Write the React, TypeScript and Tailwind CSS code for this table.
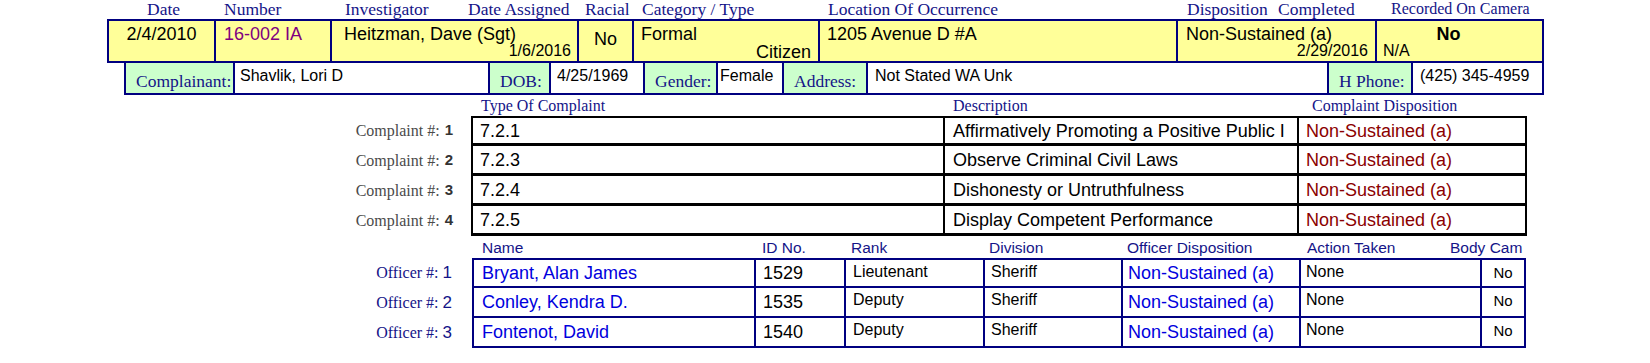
import React from 'react';

const complaints = [
  { n: 1, code: '7.2.1', desc: 'Affirmatively Promoting a Positive Public I', disp: 'Non-Sustained (a)' },
  { n: 2, code: '7.2.3', desc: 'Observe Criminal Civil Laws', disp: 'Non-Sustained (a)' },
  { n: 3, code: '7.2.4', desc: 'Dishonesty or Untruthfulness', disp: 'Non-Sustained (a)' },
  { n: 4, code: '7.2.5', desc: 'Display Competent Performance', disp: 'Non-Sustained (a)' },
];

const officers = [
  { n: 1, name: 'Bryant, Alan James', id: '1529', rank: 'Lieutenant', div: 'Sheriff', disp: 'Non-Sustained (a)', action: 'None', cam: 'No' },
  { n: 2, name: 'Conley, Kendra D.', id: '1535', rank: 'Deputy', div: 'Sheriff', disp: 'Non-Sustained (a)', action: 'None', cam: 'No' },
  { n: 3, name: 'Fontenot, David', id: '1540', rank: 'Deputy', div: 'Sheriff', disp: 'Non-Sustained (a)', action: 'None', cam: 'No' },
];

const Label = ({ w, children }: { w: string; children: React.ReactNode }) => (
  <div className={`${w} h-full shrink-0 border-r-2 border-[#000080] bg-[#ccffcc] flex items-end pl-[10px] pb-[3px] font-['Liberation_Serif',serif] text-[17.5px] leading-none text-[#141488]`}>
    {children}
  </div>
);

const Value = ({ w, pl, children }: { w: string; pl: string; children: React.ReactNode }) => (
  <div className={`${w} h-full shrink-0 border-r-2 border-[#000080] bg-white ${pl} pt-[5px] text-[16px] leading-none`}>
    {children}
  </div>
);

export default function App() {
  return (
    <div className="w-[1650px] h-[363px] bg-white overflow-hidden font-['Liberation_Sans',Arial,sans-serif] text-black">
      {/* case header labels */}
      <div className="flex h-[19px] pt-[1px] pl-[147px] font-['Liberation_Serif',serif] text-[17.5px] leading-none text-[#141488] whitespace-nowrap">
        <span className="w-[77px]">Date</span>
        <span className="w-[121px]">Number</span>
        <span className="w-[123px]">Investigator</span>
        <span className="w-[117px]">Date Assigned</span>
        <span className="w-[57px]">Racial</span>
        <span className="w-[186px]">Category / Type</span>
        <span className="w-[359px]">Location Of Occurrence</span>
        <span className="w-[91px]">Disposition</span>
        <span className="w-[113px]">Completed</span>
        <span className="text-[16px]">Recorded On Camera</span>
      </div>

      {/* case row */}
      <div className="ml-[107px] w-[1437px] h-[44px] border-2 border-[#000080] bg-[#ffff99] flex text-[18px] leading-none whitespace-nowrap">
        <div className="w-[107px] shrink-0 border-r-2 border-[#000080] text-center pt-[4px]">2/4/2010</div>
        <div className="w-[116px] shrink-0 border-r-2 border-[#000080] pl-[8px] pt-[4px] text-[#800080]">16-002 IA</div>
        <div className="w-[247px] shrink-0 border-r-2 border-[#000080] flex flex-col justify-between pt-[4px] pb-[4px]">
          <span className="pl-[12px]">Heitzman, Dave (Sgt)</span>
          <span className="text-right pr-[6px] text-[16px]">1/6/2016</span>
        </div>
        <div className="w-[55px] shrink-0 border-r-2 border-[#000080] flex items-center justify-center pb-[4px]">No</div>
        <div className="w-[186px] shrink-0 border-r-2 border-[#000080] flex flex-col justify-between pt-[4px] pb-[2px]">
          <span className="pl-[7px]">Formal</span>
          <span className="text-right pr-[7px]">Citizen</span>
        </div>
        <div className="w-[358px] shrink-0 border-r-2 border-[#000080] pl-[7px] pt-[4px]">1205 Avenue D #A</div>
        <div className="w-[199px] shrink-0 border-r-2 border-[#000080] flex flex-col justify-between pt-[4px] pb-[4px]">
          <span className="pl-[8px]">Non-Sustained (a)</span>
          <span className="text-right pr-[7px] text-[16px]">2/29/2016</span>
        </div>
        <div className="flex-1 flex flex-col justify-between pt-[4px] pb-[3px]">
          <span className="text-center pr-[22px] font-bold">No</span>
          <span className="pl-[6px] text-[16px]">N/A</span>
        </div>
      </div>

      {/* complainant row */}
      <div className="ml-[124px] w-[1420px] h-[32px] border-x-2 border-b-2 border-[#000080] flex whitespace-nowrap">
        <Label w="w-[109px]">Complainant:</Label>
        <Value w="w-[255px]" pl="pl-[5px]">Shavlik, Lori D</Value>
        <Label w="w-[61px]">DOB:</Label>
        <Value w="w-[94px]" pl="pl-[6px]">4/25/1969</Value>
        <Label w="w-[73px]">Gender:</Label>
        <Value w="w-[66px]" pl="pl-[2px]">Female</Value>
        <Label w="w-[84px]">Address:</Label>
        <Value w="w-[461px]" pl="pl-[7px]">Not Stated WA Unk</Value>
        <Label w="w-[84px]">H Phone:</Label>
        <div className="flex-1 h-full bg-white pl-[7px] pt-[5px] text-[16px] leading-none">(425) 345-4959</div>
      </div>

      {/* complaints */}
      <div className="flex h-[21px] pt-[3px] font-['Liberation_Serif',serif] text-[16px] leading-none text-[#141488] whitespace-nowrap">
        <span className="ml-[481px] w-[472px]">Type Of Complaint</span>
        <span className="w-[359px]">Description</span>
        <span>Complaint Disposition</span>
      </div>
      <div className="flex flex-col">
        {complaints.map((c, i) => (
          <div key={c.n} className="flex h-[30px]">
            <div className="w-[471px] shrink-0 flex items-center justify-end pr-[18px] pb-[1px] whitespace-nowrap">
              <span className="font-['Liberation_Serif',serif] text-[16px] text-[#4a4a4a]">Complaint #:</span>
              <span className="ml-[5px] text-[15px] font-bold text-[#333333]">{c.n}</span>
            </div>
            <div className={`w-[1056px] shrink-0 flex border-x-2 border-b-[3px] border-black text-[18px] leading-none whitespace-nowrap ${i === 0 ? 'border-t-2' : ''}`}>
              <div className="w-[472px] shrink-0 border-r-2 border-black flex items-center pl-[7px]">{c.code}</div>
              <div className="w-[354px] shrink-0 border-r-2 border-black flex items-center pl-[8px] overflow-hidden">{c.desc}</div>
              <div className="flex-1 flex items-center pl-[7px] text-[#8b0000]">{c.disp}</div>
            </div>
          </div>
        ))}
      </div>

      {/* officers */}
      <div className="flex h-[22px] pt-[4px] text-[15.5px] leading-none text-[#141488] whitespace-nowrap">
        <span className="ml-[482px] w-[280px]">Name</span>
        <span className="w-[89px]">ID No.</span>
        <span className="w-[138px]">Rank</span>
        <span className="w-[138px]">Division</span>
        <span className="w-[180px]">Officer Disposition</span>
        <span className="w-[143px]">Action Taken</span>
        <span>Body Cam</span>
      </div>
      <div className="flex flex-col">
        {officers.map((o, i) => (
          <div key={o.n} className="flex h-[30px]">
            <div className="w-[472px] shrink-0 flex items-center justify-end pr-[20px] whitespace-nowrap text-[#141488]">
              <span className="font-['Liberation_Serif',serif] text-[16px]">Officer #:</span>
              <span className="ml-[4px] text-[17px]">{o.n}</span>
            </div>
            <div className={`w-[1054px] shrink-0 flex border-x-2 border-b-2 border-[#000080] leading-none whitespace-nowrap ${i === 0 ? 'border-t-2' : ''}`}>
              <div className="w-[282px] shrink-0 border-r-2 border-[#000080] flex items-center pl-[8px] text-[18px] text-[#0000dd]">{o.name}</div>
              <div className="w-[90px] shrink-0 border-r-2 border-[#000080] flex items-center pl-[7px] text-[18px]">{o.id}</div>
              <div className="w-[139px] shrink-0 border-r-2 border-[#000080] pl-[7px] pt-[4px] text-[16px]">{o.rank}</div>
              <div className="w-[138px] shrink-0 border-r-2 border-[#000080] pl-[6px] pt-[4px] text-[16px]">{o.div}</div>
              <div className="w-[178px] shrink-0 border-r-2 border-[#000080] flex items-center pl-[5px] text-[18px] text-[#0000dd]">{o.disp}</div>
              <div className="w-[181px] shrink-0 border-r-2 border-[#000080] pl-[5px] pt-[4px] text-[16px]">{o.action}</div>
              <div className="flex-1 text-center pt-[5px] text-[15px]">{o.cam}</div>
            </div>
          </div>
        ))}
      </div>
    </div>
  );
}
